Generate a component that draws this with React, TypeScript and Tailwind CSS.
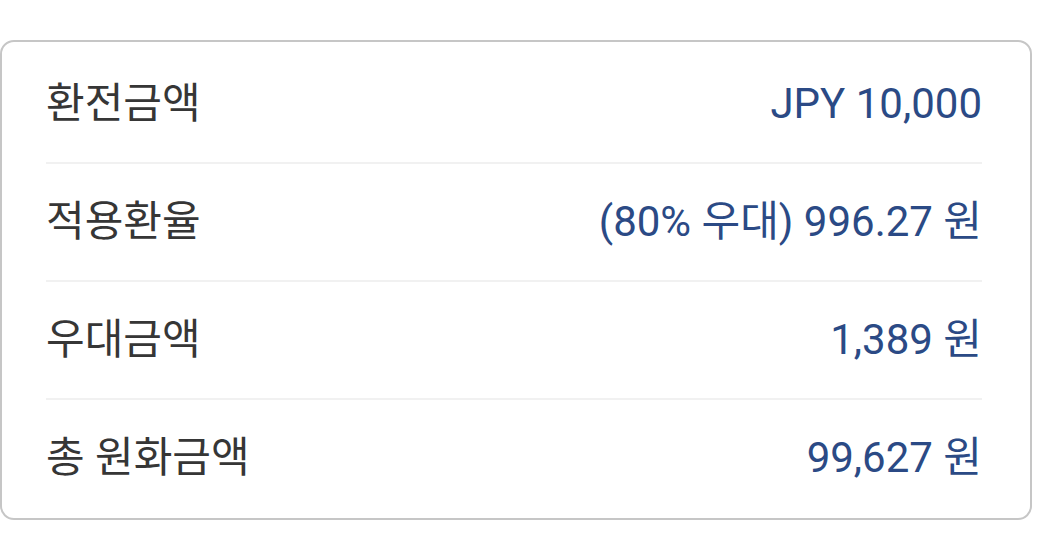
import React from "react";

const rows = [
  { label: "환전금액", value: "JPY 10,000" },
  { label: "적용환율", value: "(80% 우대) 996.27 원" },
  { label: "우대금액", value: "1,389 원" },
  { label: "총 원화금액", value: "99,627 원" },
];

export default function App() {
  return (
    <div className="w-[1056px] h-[555px] bg-white pt-[40px] pr-[24px]" style={{ fontFamily: 'Roboto, "Noto Sans CJK KR", sans-serif' }}>
      <div className="w-[1032px] border-2 border-[#c6c6c6] rounded-[14px] pl-[44px] pr-[48px] pt-[4px] pb-[2px]">
        {rows.map((r, i) => (
          <div key={i} className={i < rows.length - 1 ? "border-b-2 border-[#f1f1f1]" : ""}>
            <div className="h-[116px] flex items-center justify-between leading-none">
              <span className="text-[42px] text-[#363636]">{r.label}</span>
              <span className="text-[42px] text-[#2b4a85]">{r.value}</span>
            </div>
          </div>
        ))}
      </div>
    </div>
  );
}
